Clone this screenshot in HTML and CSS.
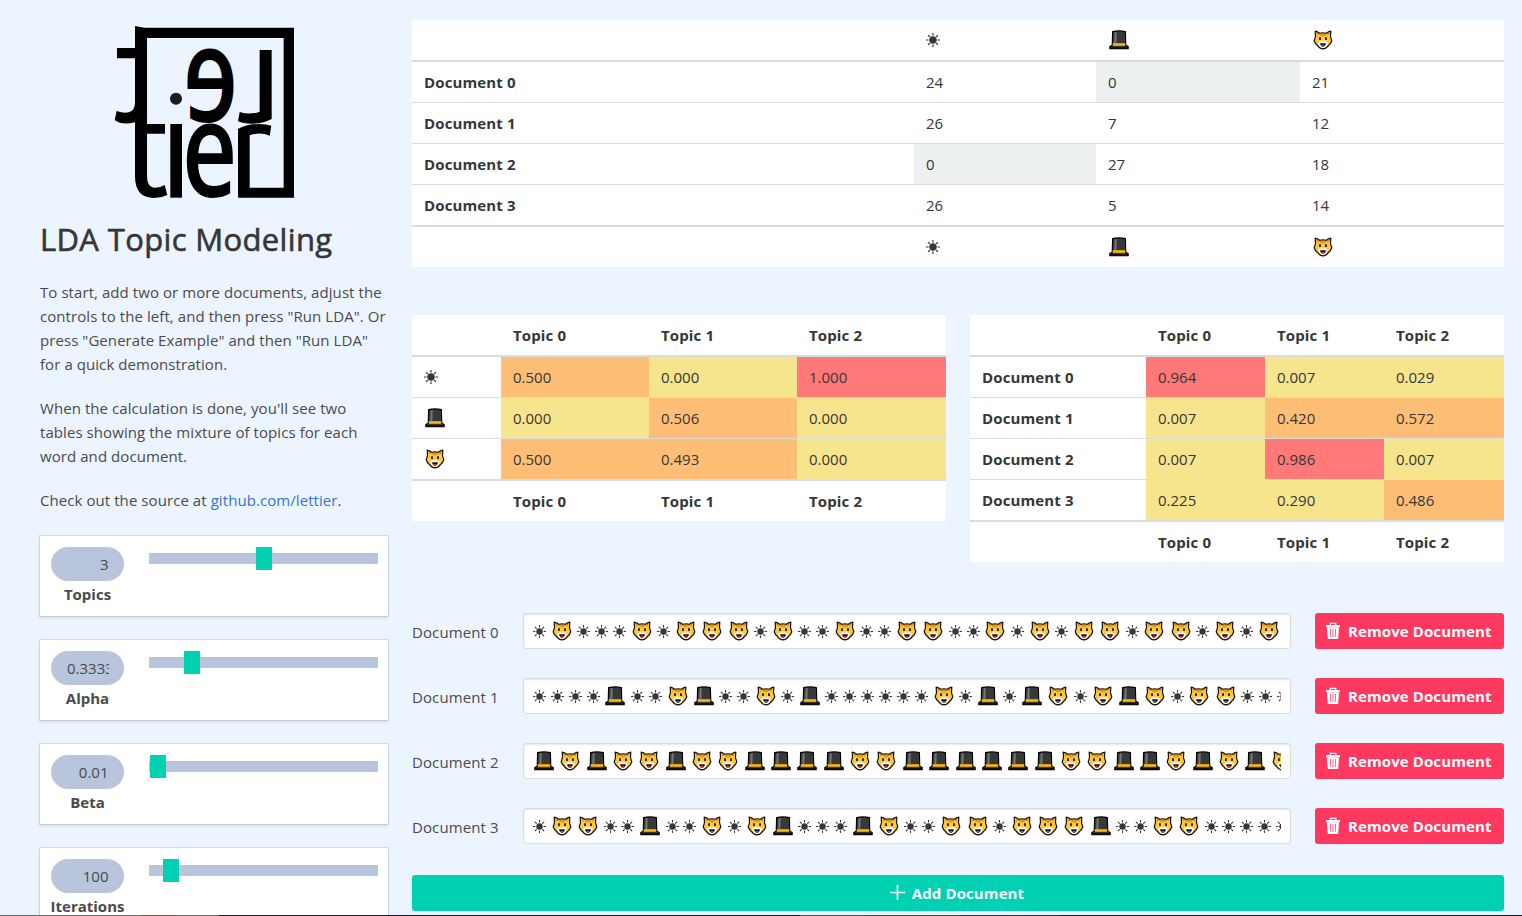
FILE: index.html
```html
<!DOCTYPE html>
<html lang="en">
<head>
<meta charset="utf-8">
<title>LDA Topic Modeling</title>
<link rel="stylesheet" href="styles.css">
</head>
<body>
<svg class="defs" aria-hidden="true">
  <symbol id="sun" viewBox="0 0 13 13">
    <circle cx="6.5" cy="6.5" r="3.2" fill="#363636"/>
    <path d="M6.5 0V2.4M6.5 10.6V13M0 6.5H2.4M10.6 6.5H13M1.9 1.9L3.7 3.7M9.3 9.3L11.1 11.1M11.1 1.9L9.3 3.7M3.7 9.3L1.9 11.1" stroke="#363636" stroke-width="1.1" fill="none"/>
  </symbol>
  <symbol id="hat" viewBox="0 0 20 20">
    <path d="M3.6 1.6Q10 0.2 16.4 1.6L16.8 15.2L19.2 16.6V18.8H0.8V16.6L3.2 15.2Z" fill="#383838" stroke="#000" stroke-width="1.1" stroke-linejoin="round"/>
    <path d="M5.7 2.2H7.7L7.4 13H5.3Z" fill="#777"/>
    <path d="M3.8 13.2H16.2V15.8H3.8Z" fill="#ffb900"/>
    <path d="M1.2 17.9H18.8" stroke="#000" stroke-width="1.2"/>
  </symbol>
  <symbol id="cat" viewBox="0 0 20 20">
    <path d="M2.2 1.2Q4.6 1.6 6.6 3.3Q10 2.6 13.4 3.3Q15.4 1.6 17.8 1.2L17.5 6.6Q18.2 9 18.8 10.8Q17.8 13.8 15.8 15.2Q13.2 18.9 10 18.9Q6.8 18.9 4.2 15.2Q2.2 13.8 1.2 10.8Q1.8 9 2.5 6.6Z" fill="#ffc83d" stroke="#111" stroke-width="1.2" stroke-linejoin="round"/>
    <path d="M8 3.6V6M10 3.4V6.6M12 3.6V6M4 3.2L5.6 5M16 3.2L14.4 5" stroke="#d67d00" stroke-width="1.2"/>
    <path d="M10 10Q12 11.6 14.8 12.4Q14 17.9 10 18Q6 17.9 5.2 12.4Q8 11.6 10 10Z" fill="#fff"/>
    <path d="M7 7.2V9.9M13 7.2V9.9" stroke="#111" stroke-width="1.7"/>
    <path d="M9 10.8H11L10 12Z" fill="#f08a7e"/>
    <path d="M7.1 13.3H12.9Q12.6 16.7 10 16.7Q7.4 16.7 7.1 13.3Z" fill="#111"/>
    <path d="M8 15.3Q10 14 12 15.3Q10 17 8 15.3Z" fill="#f03a17"/>
  </symbol>
  <symbol id="trash" viewBox="0 0 16 18">
    <path d="M5.2 3V1.3H10.8V3" fill="none" stroke="#fff" stroke-width="1.2"/>
    <path d="M1 3H15V5.2H1Z" fill="#fff"/>
    <path fill-rule="evenodd" d="M2 5.2H14L13.2 17H2.8ZM5.1 7L5.4 15H6.1L5.9 7ZM7.6 7V15H8.4V7ZM10.1 7L9.9 15H10.6L10.9 7Z" fill="#fff"/>
  </symbol>
</svg>

<div class="page">
  <aside class="side">
    <svg class="logo" viewBox="0 0 630 585" role="img" aria-label="Lettier">
      <path d="M105 33L133 38H582V548H414V342Q440 327 478 327Q500 327 514 332L509 362Q480 350 449 361V518H551V69H141V327H195V356H141V480Q141 518 165 518Q182 518 194 510L202 540Q184 549 162 549Q105 549 105 484V322Q65 332 44 315L50 288Q70 295 86 292Q105 288 105 262V130H51V99H105Z"/>
      <path d="M211 327H246V548H211Z"/>
      <path d="M479 105H515V312Q490 326 455 326Q430 326 414 319L419 291Q450 301 479 290Z"/>
      <circle cx="228" cy="251" r="18" fill="#1a1c1e"/>
      <text class="logo-letter" transform="translate(246 545) scale(2.88 3.95)">e</text>
      <text class="logo-letter" transform="translate(415 322) scale(-2.88 3.95)">e</text>
    </svg>
    <h1 class="title">LDA Topic Modeling</h1>
    <p class="copy">To start, add two or more documents, adjust the<br>controls to the left, and then press "Run LDA". Or<br>press "Generate Example" and then "Run LDA"<br>for a quick demonstration.</p>
    <p class="copy">When the calculation is done, you'll see two<br>tables showing the mixture of topics for each<br>word and document.</p>
    <p class="copy">Check out the source at <a class="link">github.com/lettier</a>.</p>

    <div class="control"><div class="field"><div class="value">3</div><div class="name">Topics</div></div><div class="track"><div class="thumb" style="margin-left:107px"></div></div></div>
    <div class="control"><div class="field"><div class="value long"><span class="clip">0.3333</span></div><div class="name">Alpha</div></div><div class="track"><div class="thumb" style="margin-left:35px"></div></div></div>
    <div class="control"><div class="field"><div class="value">0.01</div><div class="name">Beta</div></div><div class="track"><div class="thumb" style="margin-left:1px"></div></div></div>
    <div class="control"><div class="field"><div class="value">100</div><div class="name">Iterations</div></div><div class="track"><div class="thumb" style="margin-left:14px"></div></div></div>
  </aside>

  <main class="main">
    <table class="grid counts">
      <colgroup><col class="c-doc"><col class="c-sun"><col class="c-word"><col class="c-word"></colgroup>
      <thead><tr><th></th><th><svg class="g-sun"><use href="#sun"/></svg></th><th><svg class="g-pic"><use href="#hat"/></svg></th><th><svg class="g-pic"><use href="#cat"/></svg></th></tr></thead>
      <tbody>
        <tr><th>Document 0</th><td>24</td><td class="zero">0</td><td>21</td></tr>
        <tr><th>Document 1</th><td>26</td><td>7</td><td>12</td></tr>
        <tr><th>Document 2</th><td class="zero">0</td><td>27</td><td>18</td></tr>
        <tr><th>Document 3</th><td>26</td><td>5</td><td>14</td></tr>
      </tbody>
      <tfoot><tr><th></th><th><svg class="g-sun"><use href="#sun"/></svg></th><th><svg class="g-pic"><use href="#hat"/></svg></th><th><svg class="g-pic"><use href="#cat"/></svg></th></tr></tfoot>
    </table>

    <div class="pair">
      <table class="grid">
        <colgroup><col class="w-key"><col class="w-topic"><col class="w-topic"><col></colgroup>
        <thead><tr><th></th><th>Topic 0</th><th>Topic 1</th><th>Topic 2</th></tr></thead>
        <tbody>
          <tr><th><svg class="g-sun"><use href="#sun"/></svg></th><td class="mid">0.500</td><td class="low">0.000</td><td class="high">1.000</td></tr>
          <tr><th><svg class="g-pic"><use href="#hat"/></svg></th><td class="low">0.000</td><td class="mid">0.506</td><td class="low">0.000</td></tr>
          <tr><th><svg class="g-pic"><use href="#cat"/></svg></th><td class="mid">0.500</td><td class="mid">0.493</td><td class="low">0.000</td></tr>
        </tbody>
        <tfoot><tr><th></th><th>Topic 0</th><th>Topic 1</th><th>Topic 2</th></tr></tfoot>
      </table>
      <table class="grid">
        <colgroup><col class="d-key"><col class="d-topic"><col class="d-topic"><col></colgroup>
        <thead><tr><th></th><th>Topic 0</th><th>Topic 1</th><th>Topic 2</th></tr></thead>
        <tbody>
          <tr><th>Document 0</th><td class="high">0.964</td><td class="low">0.007</td><td class="low">0.029</td></tr>
          <tr><th>Document 1</th><td class="low">0.007</td><td class="mid">0.420</td><td class="mid">0.572</td></tr>
          <tr><th>Document 2</th><td class="low">0.007</td><td class="high">0.986</td><td class="low">0.007</td></tr>
          <tr><th>Document 3</th><td class="low">0.225</td><td class="low">0.290</td><td class="mid">0.486</td></tr>
        </tbody>
        <tfoot><tr><th></th><th>Topic 0</th><th>Topic 1</th><th>Topic 2</th></tr></tfoot>
      </table>
    </div>

    <div class="docs">
      <div class="doc"><label class="label">Document 0</label><div class="input"><div class="words" data-words="SCSSSCSCCCSCSSCSSCCSSCSCSCCSCCSCSC"></div></div><button class="remove"><svg class="trash"><use href="#trash"/></svg>Remove Document</button></div>
      <div class="doc"><label class="label">Document 1</label><div class="input"><div class="words" data-words="SSSSHSSCHSSCSHSSSSSSCSHSHCSCHCSCCSSS"></div></div><button class="remove"><svg class="trash"><use href="#trash"/></svg>Remove Document</button></div>
      <div class="doc"><label class="label">Document 2</label><div class="input"><div class="words" data-words="HCHCCHCCHHHHCCHHHHHHCCHHCHCHC"></div></div><button class="remove"><svg class="trash"><use href="#trash"/></svg>Remove Document</button></div>
      <div class="doc"><label class="label">Document 3</label><div class="input"><div class="words" data-words="SCCSSHSSCSCHSSSHCSSCCSCCCHSSCCSSSSS"></div></div><button class="remove"><svg class="trash"><use href="#trash"/></svg>Remove Document</button></div>
    </div>
    <button class="add"><svg class="plus" viewBox="0 0 15 15"><path d="M7.5 0V15M0 7.5H15" stroke="#fff" stroke-width="1.6"/></svg>Add Document</button>
  </main>
</div>
<div class="edge"></div>
<script src="words.js"></script>
</body>
</html>
```
FILE: styles.css
```css
* { box-sizing: border-box; }
html, body { margin: 0; height: 916px; overflow: hidden; }
body {
  background: #ecf5ff;
  color: #4a4a4a;
  font: 15px/24px "Open Sans", "Noto Sans", sans-serif;
}
.defs { position: absolute; width: 0; height: 0; }
.page { display: flex; gap: 24px; height: 916px; padding: 15px 18px 0 40px; }

/* sidebar */
.side { width: 348px; flex: none; white-space: nowrap; }
.logo { display: block; width: 210px; height: 195px; margin-left: 60px; overflow: visible; }
.logo-letter { font: 600 100px "Open Sans", sans-serif; }
.title { margin: 11px 0 23px; font-size: 31px; line-height: 36px; font-weight: 500; letter-spacing: .35px; color: #363636; -webkit-text-stroke: .6px #363636; }
.copy { margin: 0 0 20px; letter-spacing: .07px; }
.link { color: #3273dc; }
.control {
  display: flex;
  height: 80px;
  margin: 24px 0;
  padding: 11px 10px 0 11px;
  gap: 25px;
  background: #fff;
  box-shadow: 0 2px 3px rgba(10,10,10,.1), 0 0 0 1px rgba(10,10,10,.1);
}
.field { width: 73px; flex: none; }
.value {
  height: 34px;
  padding: 0 15.5px 0 15px;
  border-radius: 17px;
  background: #b8c5dc;
  line-height: 35px;
  text-align: right;
}
.value.long { padding-left: 16px; text-align: left; }
.clip { display: block; width: 42px; overflow: hidden; }
.name { margin: 1px -10px 0; text-align: center; font-weight: 700; }
.track { width: 229px; height: 11px; margin-top: 6px; background: #b8c5dc; }
.thumb { width: 16px; height: 23px; position: relative; top: -6px; background: #00d1b2; }

/* tables */
.main { width: 1092px; flex: none; padding-top: 5px; }
.grid { table-layout: fixed; width: 100%; border-collapse: separate; border-spacing: 0; background: #fff; color: #363636; }
.grid th, .grid td { height: 41px; padding: 0 12px; text-align: left; vertical-align: middle; border-bottom: 1px solid #dbdbdb; line-height: 24px; }
.grid th { font-weight: 700; letter-spacing: .13px; }
.grid thead th { height: 42px; border-bottom-width: 2px; }
.grid tbody tr:last-child > * { height: 40px; border-bottom: 0; }
.grid tfoot th { height: 42px; border-bottom: 0; border-top: 2px solid #dbdbdb; }
.grid svg { display: block; }
.c-doc { width: 502px; }
.c-sun { width: 182px; }
.c-word { width: 204px; }
.w-key { width: 89px; }
.w-topic { width: 148px; }
.d-key { width: 176px; }
.d-topic { width: 119px; }
.zero { background: #ecf0f1; }
.low { background: #f6e58d; }
.mid { background: #ffbe76; }
.high { background: #ff7979; }
.g-sun { width: 14px; height: 14px; stroke: #363636; stroke-width: .6px; }
.g-pic { width: 20px; height: 20px; margin-left: 1px; }
.pair { display: grid; grid-template-columns: 534px 534px; gap: 24px; align-items: start; margin-top: 48px; }

/* documents */
.docs { margin-top: 51px; }
.doc { display: flex; height: 36px; margin-bottom: 29px; }
.docs .doc:last-child { margin-bottom: 0; }
.label { width: 111px; line-height: 39px; letter-spacing: .1px; }
.input { width: 768px; padding: 0 9px; border: 1px solid #dbdbdb; border-radius: 3px; background: #fff; box-shadow: inset 0 1px 2px rgba(10,10,10,.1); }
.words { display: flex; align-items: center; height: 34px; overflow: hidden; }
.word { flex: none; height: 20px; }
.word-sun { width: 13px; height: 13px; margin-right: 4.87px; }
.word-pic { width: 20px; margin: 0 5.35px 0 1px; }
button { display: flex; align-items: center; border: 0; border-radius: 3px; color: #fff; font: 700 15px/24px "Open Sans", "Noto Sans", sans-serif; letter-spacing: .1px; white-space: nowrap; }
.remove { width: 189px; height: 36px; margin-left: 24px; padding: 0 0 1px 10px; background: #ff3860; }
.trash { width: 16px; height: 18px; margin-right: 7px; flex: none; }
.add { width: 100%; height: 36px; margin-top: 31px; padding: 0 2px 1px 0; justify-content: center; background: #00d1b2; }
.plus { width: 15px; height: 15px; margin-right: 7px; }

/* strip below the page */
.edge {
  position: absolute; left: 0; top: 915px; width: 1522px; height: 1px;
  background: linear-gradient(90deg, #6b6b6b 0 141px, #80532a 141px 176px, #6b6b6b 176px 219px, #182030 219px 800px, #2c5a48 800px 870px, #4c4a38 870px 960px, #283c58 960px 1060px, #182030 1060px);
}
```
FILE: words.js
```js
// Each letter stands for one word of a document: sun, hat or cat.
const icons = { S: "sun", H: "hat", C: "cat" };
document.querySelectorAll("[data-words]").forEach((row) => {
  row.innerHTML = [...row.dataset.words]
    .map((w) => `<svg class="word ${w === "S" ? "word-sun" : "word-pic"}"><use href="#${icons[w]}"/></svg>`)
    .join("");
});
```
